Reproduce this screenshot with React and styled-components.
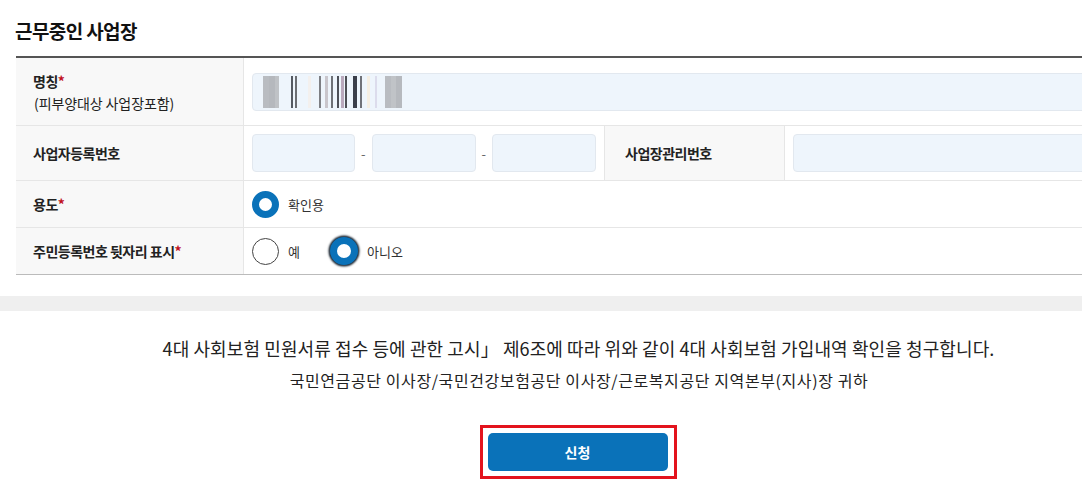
import React from "react";
import styled, { createGlobalStyle } from "styled-components";

const GlobalStyle = createGlobalStyle`
	html, body {
		margin: 0;
		padding: 0;
		background: #fff;
		overflow: hidden;
	}
	body {
		font-family: "Noto Sans CJK KR", "Noto Sans", sans-serif;
		color: #222;
	}
`;

const App = () => {
	return (
		<>
			<GlobalStyle />
			<Page>
				<Title>근무중인 사업장</Title>
				<Table>
					<Label $h={68}>
						<span>
							명칭<Req>*</Req>
						</span>
						<Sub>(피부양대상 사업장포함)</Sub>
					</Label>
					<Value $span>
						<Input $wide>
							<Masked />
						</Input>
					</Value>

					<Label>사업자등록번호</Label>
					<Value>
						<Input $w={103} />
						<Dash>-</Dash>
						<Input $w={104} />
						<Dash>-</Dash>
						<Input $w={104} />
					</Value>
					<Label $narrow>사업장관리번호</Label>
					<Value>
						<Input $wide />
					</Value>

					<Label $h={47}>
						<span>
							용도<Req>*</Req>
						</span>
					</Label>
					<Value $span>
						<RadioGroup>
							<Radio $checked />
							<RadioText>확인용</RadioText>
						</RadioGroup>
					</Value>

					<Label $h={46} $last>
						<span>
							주민등록번호 뒷자리 표시<Req>*</Req>
						</span>
					</Label>
					<Value $span $last>
						<RadioGroup>
							<Radio />
							<RadioText>예</RadioText>
						</RadioGroup>
						<RadioGroup>
							<Radio $checked $focus />
							<RadioText>아니오</RadioText>
						</RadioGroup>
					</Value>
				</Table>
			</Page>
			<Band />
			<Notice>
				<p className="main">
					4대 사회보험 민원서류 접수 등에 관한 고시」 제6조에 따라 위와 같이 4대
					사회보험 가입내역 확인을 청구합니다.
				</p>
				<p className="sub">
					국민연금공단 이사장/국민건강보험공단 이사장/근로복지공단 지역본부(지사)장
					귀하
				</p>
			</Notice>
			<BtnWrap>
				<Highlight>
					<SubmitBtn type="button">신청</SubmitBtn>
				</Highlight>
			</BtnWrap>
		</>
	);
};

// masked (blurred) business name, drawn as vertical bars
const bars = [
	[0, 6, "#b9bcc1"], [6, 6, "#b5b8bd"], [12, 4, "#bfc2c6"],
	[28, 2, "#555a62"], [32, 2, "#6b6e73"], [45, 3, "#f3f0ee"],
	[56, 2, "#7d7f84"], [62, 3, "#c9c6cc"], [68, 2, "#6e7177"],
	[74, 2, "#4d5058"], [78, 3, "#b9a9bd"], [82, 2, "#4c4f55"],
	[90, 4, "#3b3f4a"], [97, 2, "#707279"], [104, 3, "#f5efe4"],
	[112, 2, "#dcdcec"], [122, 6, "#b9bcc1"], [128, 5, "#c0c3c7"],
	[133, 6, "#b6b9be"],
];

const Masked = () => (
	<svg width="150" height="32" viewBox="0 0 150 32">
		{bars.map(([x, w, c], i) => (
			<rect key={i} x={x} y="0" width={w} height="32" fill={c} />
		))}
	</svg>
);

const Page = styled.div`
	padding: 16px 0 0 16px;
`;

const Title = styled.h2`
	margin: 0 0 0 -1px;
	font-size: 19px;
	font-weight: 700;
	line-height: 30px;
	letter-spacing: -0.6px;
	color: #111;
`;

const Table = styled.div`
	margin-top: 10px;
	width: 1100px;
	display: grid;
	grid-template-columns: 228px 361px 180px 1fr;
	border-top: 2px solid #555;
	border-bottom: 1px solid #bbb;
`;

const Label = styled.div`
	box-sizing: border-box;
	height: ${(p) => p.$h || 55}px;
	background: #f8f8f8;
	border-right: 1px solid #e6e6e6;
	border-bottom: ${(p) => (p.$last ? "none" : "1px solid #e6e6e6")};
	padding-left: ${(p) => (p.$narrow ? 20 : 17)}px;
	display: flex;
	flex-direction: column;
	justify-content: center;
	font-size: 14px;
	font-weight: 700;
	letter-spacing: -0.5px;
	color: #222;
	line-height: 22px;
`;

const Sub = styled.span`
	font-weight: 400;
	font-size: 14px;
	letter-spacing: -0.1px;
	margin-left: 1px;
`;

const Req = styled.span`
	color: #c1121f;
`;

const Value = styled.div`
	box-sizing: border-box;
	grid-column: ${(p) => (p.$span ? "span 3" : "auto")};
	border-right: 1px solid #e6e6e6;
	border-bottom: ${(p) => (p.$last ? "none" : "1px solid #e6e6e6")};
	padding: 0 8px;
	display: flex;
	align-items: center;
`;

const Input = styled.div`
	box-sizing: border-box;
	flex: ${(p) => (p.$wide ? 1 : "none")};
	width: ${(p) => (p.$w ? `${p.$w}px` : "auto")};
	height: 38px;
	background: #eef5fc;
	border: 1px solid #e2e8ef;
	border-radius: 4px;
	display: flex;
	align-items: center;
	padding-left: 10px;
`;

const Dash = styled.span`
	width: 17px;
	text-align: center;
	font-size: 13px;
	color: #666;
`;

const RadioGroup = styled.label`
	display: flex;
	align-items: center;
	margin-right: 30px;
`;

const Radio = styled.span`
	box-sizing: border-box;
	width: ${(p) => (p.$focus ? 28 : 27)}px;
	height: ${(p) => (p.$focus ? 28 : 27)}px;
	border-radius: 50%;
	background: #fff;
	border: ${(p) => (p.$checked ? "7px solid #0a72b9" : "1px solid #444")};
	box-shadow: ${(p) => (p.$focus ? "0 0 2px 1.5px #1b2733" : "none")};
`;

const RadioText = styled.span`
	margin-left: 9px;
	font-size: 13px;
	color: #333;
`;

const Band = styled.div`
	margin-top: 21px;
	height: 15px;
	background: #efefef;
`;

const Notice = styled.div`
	margin-top: 20px;
	text-align: center;
	p {
		margin: 0;
		color: #222;
	}
	.main {
		font-size: 18px;
		line-height: 34px;
		letter-spacing: 0.1px;
		padding-left: 75px;
	}
	.sub {
		font-size: 16px;
		line-height: 30px;
		letter-spacing: 0.6px;
		padding-left: 76px;
	}
`;

const BtnWrap = styled.div`
	margin-top: 30px;
	display: flex;
	justify-content: center;
	padding-left: 74px;
`;

const Highlight = styled.div`
	border: 3px solid #e3131d;
	padding: 5px 6px 5px 5px;
`;

const SubmitBtn = styled.button`
	width: 180px;
	height: 38px;
	border: none;
	border-radius: 5px;
	background: #0a72b9;
	color: #fff;
	font-family: "Noto Sans CJK KR", sans-serif;
	font-size: 14px;
	font-weight: 700;
	cursor: pointer;
`;

export default App;
